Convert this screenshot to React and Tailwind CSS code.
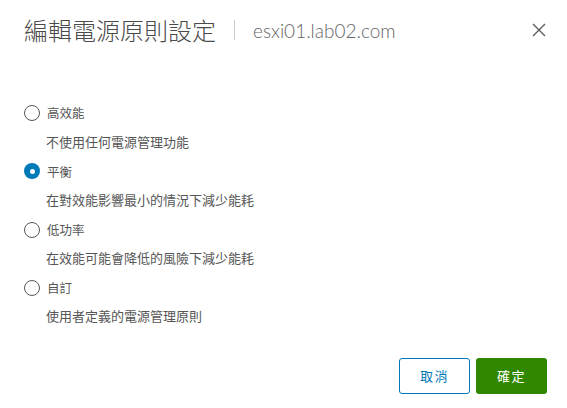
import React from "react";

const options = [
  { label: "高效能", desc: "不使用任何電源管理功能", checked: false },
  { label: "平衡", desc: "在對效能影響最小的情況下減少能耗", checked: true },
  { label: "低功率", desc: "在效能可能會降低的風險下減少能耗", checked: false },
  { label: "自訂", desc: "使用者定義的電源管理原則", checked: false },
];

export default function App() {
  return (
    <div
      className="w-[567px] h-[408px] bg-white relative overflow-hidden"
      style={{ fontFamily: '"Noto Sans CJK TC", "Noto Sans", sans-serif' }}
    >
      <div className="flex items-center h-[40px] mt-[10px] pl-[24px] pr-[20px]">
        <div className="text-[24px] font-light text-[#4a4a4a] leading-none tracking-[0px]">編輯電源原則設定</div>
        <div className="w-px h-[20px] bg-[#cccccc] ml-[18px] mr-[18px]" />
        <div
          className="text-[19px] font-light text-[#666666] leading-none"
          style={{ fontFamily: 'Lato, "Noto Sans", sans-serif' }}
        >
          esxi01.lab02.com
        </div>
        <div className="flex-1" />
        <svg width="16" height="16" viewBox="0 0 16 16">
          <path d="M2 2 L14 14 M14 2 L2 14" stroke="#5c5c5c" strokeWidth="1.4" fill="none" />
        </svg>
      </div>

      <div className="flex flex-col pl-[24px] mt-[53px] gap-[10.3px]">
        {options.map((o) => (
          <div key={o.label} className="flex flex-col">
            <div className="flex items-center h-[20px]">
              {o.checked ? (
                <div className="w-[16px] h-[16px] rounded-full bg-[#0079b8] flex items-center justify-center">
                  <div className="w-[5px] h-[5px] rounded-full bg-white" />
                </div>
              ) : (
                <div className="w-[16px] h-[16px] rounded-full border border-[#565656] bg-white" />
              )}
              <span className="ml-[7px] text-[12.5px] text-[#565656] leading-none pt-[1px]">{o.label}</span>
            </div>
            <div className="h-[20px] mt-[8px] flex items-center pl-[22px] text-[13px] text-[#565656] leading-none">
              {o.desc}
            </div>
          </div>
        ))}
      </div>

      <div className="flex justify-end gap-[6px] pr-[20px] mt-[32px]">
        <button className="w-[71px] h-[36px] rounded-[3px] border border-[#0079b8] text-[#0079b8] text-[13px] tracking-[0.12em] bg-white">
          取消
        </button>
        <button className="w-[71px] h-[36px] rounded-[3px] bg-[#318700] text-white text-[13px] tracking-[0.12em]">
          確定
        </button>
      </div>
    </div>
  );
}
